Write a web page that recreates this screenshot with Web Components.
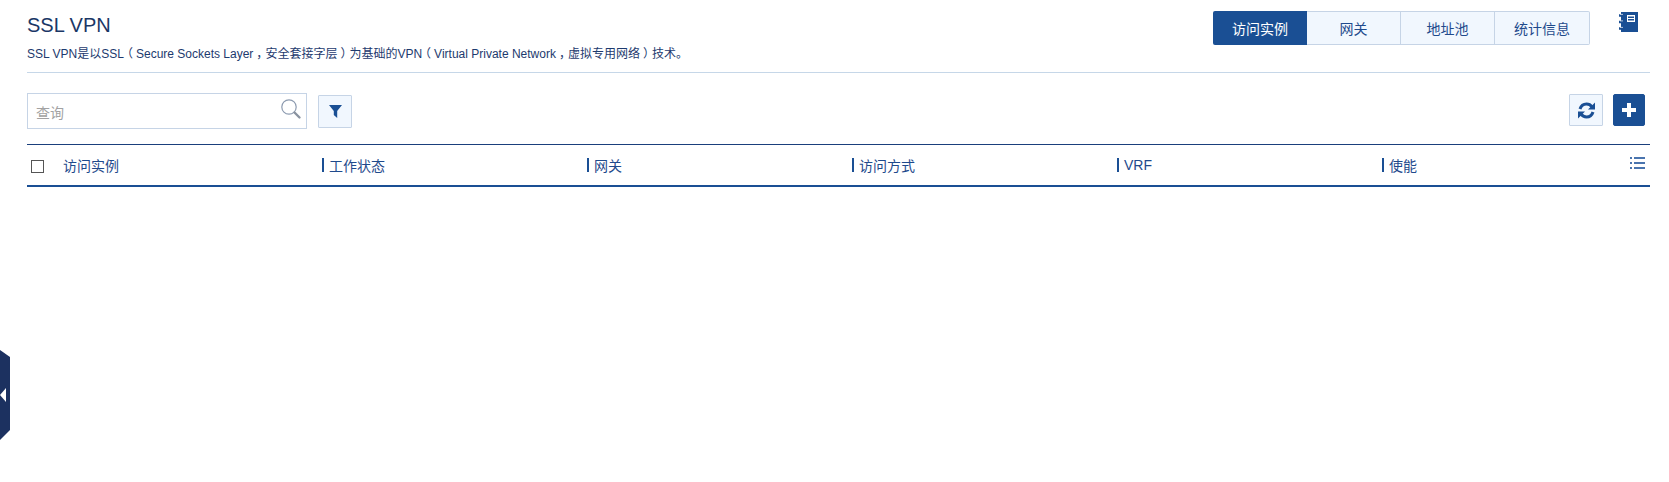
<!DOCTYPE html>
<html>
<head>
<meta charset="utf-8">
<title>SSL VPN</title>
<style>
html, body { margin: 0; height: 100%; background: #fff; }
body { font-family: "Liberation Sans", "Noto Sans CJK SC", sans-serif; color: #1d3a6e; overflow: hidden; }
</style>
</head>
<body>
<vpn-page></vpn-page>
<script>
const sharedFont = `"Liberation Sans", "Noto Sans CJK SC", sans-serif`;

class VpnTabs extends HTMLElement {
    constructor() {
        super();
        this.attachShadow({ mode: 'open' });
    }

    connectedCallback() {
        const items = ['访问实例', '网关', '地址池', '统计信息'];
        this.shadowRoot.innerHTML = `
            <style>
                :host { display: flex; height: 34px; font: 14px ${sharedFont}; }
                .tab {
                    width: 94px;
                    box-sizing: border-box;
                    display: flex;
                    align-items: center;
                    justify-content: center;
                    background: #f1f7fe;
                    color: #1f4a8c;
                    border: 1px solid #c6d4e6;
                    border-left: 0;
                }
                .tab:first-of-type { background: #1a4f94; color: #fff; border: 0; border-radius: 2px 0 0 2px; }
                .tab:last-of-type { width: 95px; border-radius: 0 2px 2px 0; }
            </style>
            ${items.map(t => `<div class="tab">${t}</div>`).join('')}
        `;
    }
}

class VpnSearch extends HTMLElement {
    constructor() {
        super();
        this.attachShadow({ mode: 'open' });
    }

    connectedCallback() {
        this.shadowRoot.innerHTML = `
            <style>
                :host {
                    display: flex;
                    align-items: center;
                    justify-content: space-between;
                    box-sizing: border-box;
                    width: 280px;
                    height: 36px;
                    padding: 1px 4px 0 8px;
                    border: 1px solid #c6d4e6;
                    font: 14px ${sharedFont};
                    color: #a2a2a2;
                }
                svg { display: block; margin-top: -5px; }
            </style>
            <span>查询</span>
            <svg width="22" height="22" viewBox="0 0 22 22">
                <circle cx="9" cy="9" r="7.2" fill="none" stroke="#8d9bb0" stroke-width="1.2"/>
                <path d="M14.5 14.5l5 5" stroke="#8a93a0" stroke-width="2.4" stroke-linecap="round"/>
            </svg>
        `;
    }
}

class VpnIconButton extends HTMLElement {
    constructor() {
        super();
        this.attachShadow({ mode: 'open' });
    }

    connectedCallback() {
        this.shadowRoot.innerHTML = `
            <style>
                :host {
                    display: flex;
                    align-items: center;
                    justify-content: center;
                    box-sizing: border-box;
                    height: 33px;
                    background: #f1f7fe;
                    border: 1px solid #c6d4e6;
                    border-radius: 1px;
                }
                :host([primary]) { background: #1a4f94; border-color: #1a4f94; border-radius: 2px; }
                ::slotted(svg) { display: block; }
            </style>
            <slot></slot>
        `;
    }
}

class VpnHeaderRow extends HTMLElement {
    constructor() {
        super();
        this.attachShadow({ mode: 'open' });
    }

    connectedCallback() {
        const cols = ['工作状态', '网关', '访问方式', 'VRF', '使能'];
        this.shadowRoot.innerHTML = `
            <style>
                :host {
                    display: block;
                    position: relative;
                    box-sizing: border-box;
                    height: 43px;
                    border-top: 1px solid #1a3f7c;
                    border-bottom: 2px solid #1a4f94;
                    font: 14px ${sharedFont};
                    color: #1f4a8c;
                }
                .row { display: flex; height: 40px; align-items: center; }
                .first { width: 295px; display: flex; align-items: center; flex: none; }
                .box {
                    box-sizing: border-box;
                    width: 13px;
                    height: 13px;
                    margin: 2px 10px 0 4px;
                    border: 1px solid #555;
                    background: #fff;
                    flex: none;
                }
                .label { margin-left: 9px; }
                .cell {
                    width: 265px;
                    flex: none;
                    display: flex;
                    align-items: center;
                    gap: 5px;
                }
                .bar { width: 2px; height: 14px; background: #1a4f94; margin-top: -1px; }
                .list { position: absolute; right: 5px; top: 12px; display: block; }
            </style>
            <div class="row">
                <div class="first"><span class="box"></span><span class="label">访问实例</span></div>
                ${cols.map(c => `<div class="cell"><span class="bar"></span><span>${c}</span></div>`).join('')}
            </div>
            <svg class="list" width="15" height="12" viewBox="0 0 15 12" fill="#4a74ae">
                <rect x="0" y="0" width="2" height="2"/><rect x="4" y="0" width="11" height="2"/>
                <rect x="0" y="5" width="2" height="2"/><rect x="4" y="5" width="11" height="2"/>
                <rect x="0" y="10" width="2" height="2"/><rect x="4" y="10" width="11" height="2"/>
            </svg>
        `;
    }
}

class VpnPage extends HTMLElement {
    constructor() {
        super();
        this.attachShadow({ mode: 'open' });
    }

    connectedCallback() {
        this.shadowRoot.innerHTML = `
            <style>
                :host {
                    display: block;
                    position: relative;
                    height: 482px;
                    box-sizing: border-box;
                    padding: 0 19px 0 27px;
                    font-family: ${sharedFont};
                }
                .top {
                    display: flex;
                    justify-content: space-between;
                    height: 72px;
                    border-bottom: 1px solid #c6d7e8;
                }
                h1 { margin: 13px 0 0; font-size: 20px; line-height: 24px; font-weight: 400; color: #1a3766; }
                p { margin: 8px 0 0; font-size: 12px; line-height: 18px; color: #1d3a6e; }
                /* fullwidth punctuation sits centred in its cell in the reference font */
                .l { margin: 0 3px 0 -3px; }
                .r { margin: 0 -3px 0 3px; }
                .right { display: flex; padding-top: 11px; }
                .note { margin: 1px 12px 0 29px; display: block; }
                .tools {
                    display: flex;
                    justify-content: space-between;
                    align-items: flex-start;
                    padding-top: 20px;
                    height: 51px;
                }
                .tool-left { display: flex; gap: 11px; align-items: center; }
                .tool-right { display: flex; gap: 10px; margin: 1px 5px 0 0; }
                .filter { width: 34px; }
                .refresh { width: 34px; height: 32px; }
                .add { width: 32px; height: 32px; }
                .handle { position: absolute; left: 0; top: 350px; display: block; }
            </style>
            <div class="top">
                <div>
                    <h1>SSL VPN</h1>
                    <p>SSL VPN是以SSL<span class="l">（</span>Secure Sockets Layer<span class="r">，</span>安全套接字层<span class="r">）</span>为基础的VPN<span class="l">（</span>Virtual Private Network<span class="r">，</span>虚拟专用网络<span class="r">）</span>技术。</p>
                </div>
                <div class="right">
                    <vpn-tabs></vpn-tabs>
                    <svg class="note" width="19" height="21" viewBox="0 0 19 21">
                        <rect x="2" y="0" width="17" height="20" fill="#1a4f94"/>
                        <path d="M0 3.5h4M0 10h4M0 16.5h4" stroke="#1a4f94" stroke-width="2.6" stroke-linecap="round"/>
                        <path d="M1 2.4h3M1 8.9h3M1 15.4h3" stroke="#fff" stroke-width=".7"/>
                        <rect x="8" y="3" width="8" height="7" fill="#fff"/>
                        <path d="M9 5.2h6M9 7.8h6" stroke="#1a4f94" stroke-width="1.4"/>
                    </svg>
                </div>
            </div>
            <div class="tools">
                <div class="tool-left">
                    <vpn-search></vpn-search>
                    <vpn-icon-button class="filter">
                        <svg width="13" height="13" viewBox="0 0 13 13"><path d="M0 0h13L8.2 6v7L4.8 10V6z" fill="#1a4f94"/></svg>
                    </vpn-icon-button>
                </div>
                <div class="tool-right">
                    <vpn-icon-button class="refresh">
                        <svg width="17" height="17" viewBox="0 0 17 17" fill="none" stroke="#1a4f94" stroke-width="3">
                            <path d="M2 7C3 3.8 5.4 2 8.5 2c2.4 0 4.2 1 5.4 2.8"/>
                            <path d="M15 10C14 13.2 11.6 15 8.5 15c-2.4 0-4.2-1-5.4-2.8"/>
                            <path d="M17 .5v7h-7z" fill="#1a4f94" stroke="none"/>
                            <path d="M0 16.5v-7h7z" fill="#1a4f94" stroke="none"/>
                        </svg>
                    </vpn-icon-button>
                    <vpn-icon-button class="add" primary>
                        <svg width="14" height="14" viewBox="0 0 14 14"><path d="M5 0h4v5h5v4H9v5H5V9H0V5h5z" fill="#fff"/></svg>
                    </vpn-icon-button>
                </div>
            </div>
            <vpn-header-row></vpn-header-row>
            <svg class="handle" width="10" height="90" viewBox="0 0 10 90">
                <path d="M0 0L10 7V80L0 90z" fill="#1c3160"/>
                <path d="M6 38v14L0 45z" fill="#fff"/>
            </svg>
        `;
    }
}

customElements.define('vpn-tabs', VpnTabs);
customElements.define('vpn-search', VpnSearch);
customElements.define('vpn-icon-button', VpnIconButton);
customElements.define('vpn-header-row', VpnHeaderRow);
customElements.define('vpn-page', VpnPage);
</script>
</body>
</html>
